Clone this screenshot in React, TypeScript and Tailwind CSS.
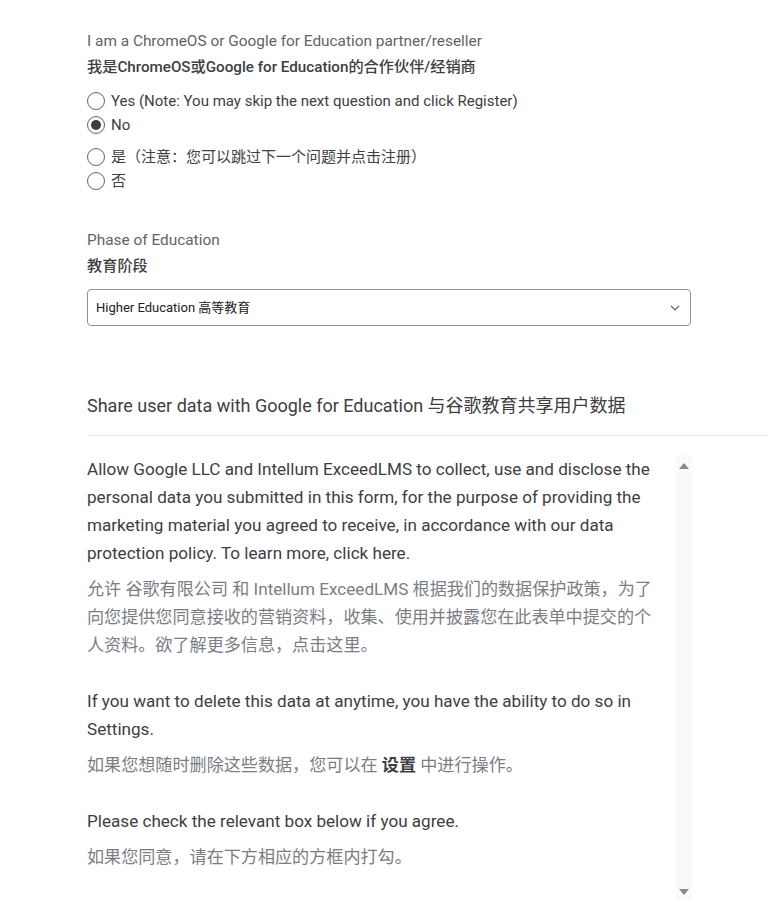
import React from 'react';

const font = { fontFamily: 'Roboto, "Noto Sans CJK SC", sans-serif' };

interface RadioOption {
  label: string;
  checked?: boolean;
}

const Radio = ({ label, checked }: RadioOption) => (
  <label className="flex items-center gap-[6px] h-[24px] text-[15px] text-[#3c4043]">
    <span className="w-[18px] h-[18px] rounded-full border border-[#5f6368] flex items-center justify-center bg-white">
      {checked && <span className="w-[10px] h-[10px] rounded-full bg-[#3c4043]" />}
    </span>
    {label}
  </label>
);

const Triangle = ({ up }: { up?: boolean }) => (
  <svg width="10" height="6" viewBox="0 0 10 6">
    <path d={up ? 'M0 6 L5 0 L10 6 Z' : 'M0 0 L5 6 L10 0 Z'} fill="#8a8a8a" />
  </svg>
);

const App = () => {
  return (
    <div className="w-[768px] h-[900px] bg-white overflow-hidden" style={font}>
      <div className="pl-[87px] pt-[31px]">
        {/* Partner question */}
        <p className="text-[15.4px] text-[#5f6368] leading-[20px]">
          I am a ChromeOS or Google for Education partner/reseller
        </p>
        <p className="text-[15.2px] font-medium text-[#3c4043] leading-[20px] mt-[6px]">
          我是ChromeOS或Google for Education的合作伙伴/经销商
        </p>
        <div className="mt-[12px]">
          <Radio label="Yes (Note: You may skip the next question and click Register)" />
          <Radio label="No" checked />
        </div>
        <div className="mt-[8px]">
          <Radio label="是（注意：您可以跳过下一个问题并点击注册）" />
          <Radio label="否" />
        </div>

        {/* Phase of education */}
        <p className="text-[15.4px] text-[#5f6368] leading-[20px] mt-[37px]">Phase of Education</p>
        <p className="text-[15.2px] font-medium text-[#3c4043] leading-[20px] mt-[6px]">教育阶段</p>
        <div className="mt-[13px] w-[604px] h-[37px] border border-[#8f9499] rounded-[4px] flex items-center justify-between pl-[8px] pr-[10px]">
          <span className="text-[13px] text-[#202124]">Higher Education 高等教育</span>
          <svg width="10" height="6" viewBox="0 0 10 6">
            <path d="M1 1 L5 5 L9 1" fill="none" stroke="#5f6368" strokeWidth="1.2" />
          </svg>
        </div>

        {/* Share data section */}
        <h2 className="text-[18px] text-[#3c4043] leading-[26px] mt-[67px]">
          Share user data with Google for Education 与谷歌教育共享用户数据
        </h2>
      </div>
      <div className="ml-[87px] mt-[16px] border-t border-[#e8eaed]" />

      <div className="flex pl-[87px] pt-[19px] h-[470px]">
        <div className="w-[575px] mr-[14px] text-[17.1px] leading-[28px]">
          <p className="text-[#3c4043]">
            Allow Google LLC and Intellum ExceedLMS to collect, use and disclose the personal data you
            submitted in this form, for the purpose of providing the marketing material you agreed to
            receive, in accordance with our data protection policy. To learn more, click here.
          </p>
          <p className="text-[#7a7e83] mt-[8px]">
            允许 谷歌有限公司 和 Intellum ExceedLMS 根据我们的数据保护政策，为了向您提供您同意接收的营销资料，收集、使用并披露您在此表单中提交的个人资料。欲了解更多信息，点击这里。
          </p>
          <p className="text-[#3c4043] mt-[28px]">
            If you want to delete this data at anytime, you have the ability to do so in Settings.
          </p>
          <p className="text-[#7a7e83] mt-[8px]">
            如果您想随时删除这些数据，您可以在 <span className="font-bold text-[#3c4043]">设置</span> 中进行操作。
          </p>
          <p className="text-[#3c4043] mt-[28px]">Please check the relevant box below if you agree.</p>
          <p className="text-[#7a7e83] mt-[8px]">如果您同意，请在下方相应的方框内打勾。</p>
        </div>
        {/* scrollbar */}
        <div className="w-[16px] bg-[#fafafa] flex flex-col justify-between items-center pt-[8px] pb-[8px] h-[448px]">
          <Triangle up />
          <Triangle />
        </div>
      </div>
    </div>
  );
};

export default App;
